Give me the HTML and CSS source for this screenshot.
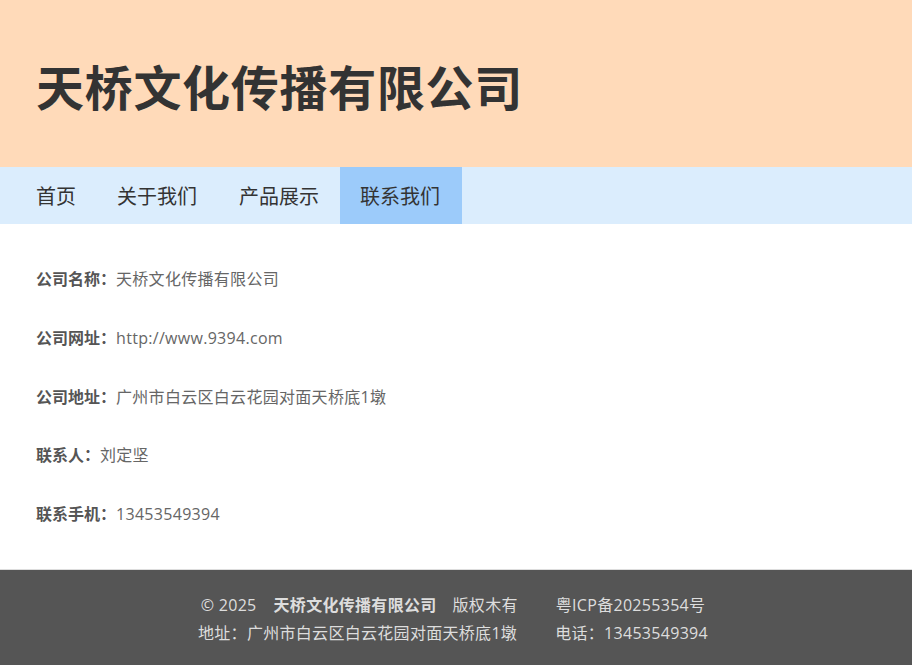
FILE: index.html
```html
<!DOCTYPE html>
<html lang="zh-CN">
<head>
<meta charset="utf-8">
<title>天桥文化传播有限公司</title>
<link rel="stylesheet" href="styles.css">
</head>
<body>
<header class="site-header">
  <h1 class="site-title">天桥文化传播有限公司</h1>
</header>
<nav class="site-nav">
  <ul class="nav-list">
    <li class="nav-item"><a href="#">首页</a></li>
    <li class="nav-item"><a href="#">关于我们</a></li>
    <li class="nav-item"><a href="#">产品展示</a></li>
    <li class="nav-item active"><a href="#">联系我们</a></li>
  </ul>
</nav>
<main class="contact">
  <p class="row"><span class="label">公司名称：</span><span class="value">天桥文化传播有限公司</span></p>
  <p class="row"><span class="label">公司网址：</span><span class="value">http://www.9394.com</span></p>
  <p class="row"><span class="label">公司地址：</span><span class="value">广州市白云区白云花园对面天桥底1墩</span></p>
  <p class="row"><span class="label">联系人：</span><span class="value">刘定坚</span></p>
  <p class="row"><span class="label">联系手机：</span><span class="value">13453549394</span></p>
</main>
<footer class="site-footer">
  <p class="foot-line"><span>© 2025</span><strong class="foot-name">天桥文化传播有限公司</strong><span>版权木有</span><span class="foot-gap">粤ICP备20255354号</span></p>
  <p class="foot-line"><span>地址：广州市白云区白云花园对面天桥底1墩</span><span class="foot-gap">电话：13453549394</span></p>
</footer>
</body>
</html>
```
FILE: styles.css
```css
* { box-sizing: border-box; }
html, body { margin: 0; padding: 0; }
body {
  font-family: "Open Sans", "Noto Sans CJK SC", sans-serif;
  background: #fff;
  color: #333;
}
.site-header {
  background: #ffdab9;
  height: 167px;
  display: flex;
  align-items: center;
  padding: 0 36px;
}
.site-title {
  margin: 0;
  font-family: "Noto Sans CJK SC", sans-serif;
  font-size: 48px;
  font-weight: 700;
  letter-spacing: 0.7px;
  line-height: 1;
  color: #333;
  position: relative;
  top: 1px;
}
.site-nav {
  background: #dbedfd;
  height: 57px;
  padding-left: 16px;
}
.nav-list {
  list-style: none;
  margin: 0;
  padding: 0;
  display: flex;
  height: 100%;
}
.nav-item a {
  display: block;
  height: 57px;
  line-height: 57px;
  padding: 0 20px;
  font-family: "Noto Sans CJK SC", sans-serif;
  font-size: 20px;
  color: #333;
  text-decoration: none;
  width: 121px;
}
.nav-item:first-child a { width: auto; padding-right: 21px; }
.nav-item:nth-child(2) a { width: 122px; }
.nav-item.active a { background: #9ccbfa; width: 122px; }
.contact {
  padding: 43px 36px;
  display: flex;
  flex-direction: column;
  gap: 34.75px;
}
.row {
  margin: 0;
  font-size: 16px;
  line-height: 24px;
  color: #666;
}
.label { font-weight: 700; color: #555; }
.value { letter-spacing: 0.3px; }
.site-footer {
  background: #555;
  color: #ddd;
  text-align: center;
  padding: 21px 6px 30px 0;
  border-top: 1px solid #ddd;
}
.foot-line {
  margin: 0;
  font-size: 16px;
  line-height: 28px;
  letter-spacing: 0.3px;
}
.foot-name {
  font-size: 16px;
  margin: 0 16px 0 17px;
}
.foot-gap { margin-left: 38px; }
```
